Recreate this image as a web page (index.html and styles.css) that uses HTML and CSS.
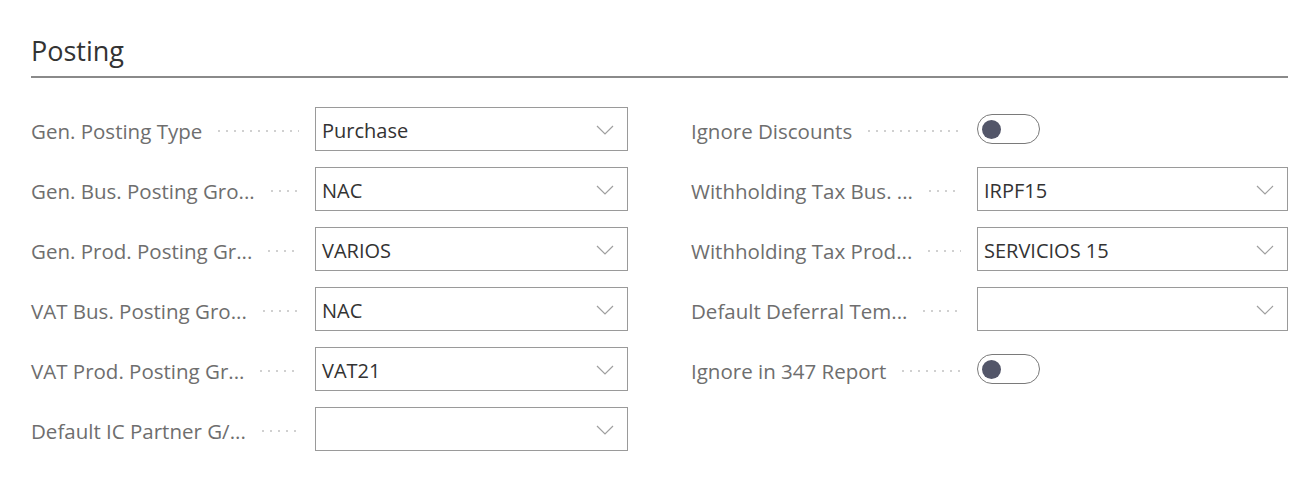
FILE: index.html
```html
<!DOCTYPE html>
<html lang="en">
<head>
<meta charset="utf-8">
<title>Posting</title>
<link rel="stylesheet" href="styles.css">
</head>
<body>
<section class="group">
  <h2 class="group-title">Posting</h2>
  <div class="columns">
    <div class="col">
      <div class="field">
        <div class="label"><span class="label-text">Gen. Posting Type</span><span class="leader"></span></div>
        <div class="select"><span class="value">Purchase</span><svg class="chev" viewBox="0 0 18 10"><polyline points="1,1 9,9 17,1"/></svg></div>
      </div>
      <div class="field">
        <div class="label"><span class="label-text">Gen. Bus. Posting Gro...</span><span class="leader"></span></div>
        <div class="select"><span class="value">NAC</span><svg class="chev" viewBox="0 0 18 10"><polyline points="1,1 9,9 17,1"/></svg></div>
      </div>
      <div class="field">
        <div class="label"><span class="label-text">Gen. Prod. Posting Gr...</span><span class="leader"></span></div>
        <div class="select"><span class="value">VARIOS</span><svg class="chev" viewBox="0 0 18 10"><polyline points="1,1 9,9 17,1"/></svg></div>
      </div>
      <div class="field">
        <div class="label"><span class="label-text">VAT Bus. Posting Gro...</span><span class="leader"></span></div>
        <div class="select"><span class="value">NAC</span><svg class="chev" viewBox="0 0 18 10"><polyline points="1,1 9,9 17,1"/></svg></div>
      </div>
      <div class="field">
        <div class="label"><span class="label-text">VAT Prod. Posting Gr...</span><span class="leader"></span></div>
        <div class="select"><span class="value">VAT21</span><svg class="chev" viewBox="0 0 18 10"><polyline points="1,1 9,9 17,1"/></svg></div>
      </div>
      <div class="field">
        <div class="label"><span class="label-text">Default IC Partner G/...</span><span class="leader"></span></div>
        <div class="select"><span class="value"></span><svg class="chev" viewBox="0 0 18 10"><polyline points="1,1 9,9 17,1"/></svg></div>
      </div>
    </div>
    <div class="col col-right">
      <div class="field">
        <div class="label"><span class="label-text">Ignore Discounts</span><span class="leader"></span></div>
        <div class="control"><span class="toggle"><span class="knob"></span></span></div>
      </div>
      <div class="field">
        <div class="label"><span class="label-text">Withholding Tax Bus. ...</span><span class="leader"></span></div>
        <div class="select"><span class="value">IRPF15</span><svg class="chev" viewBox="0 0 18 10"><polyline points="1,1 9,9 17,1"/></svg></div>
      </div>
      <div class="field">
        <div class="label"><span class="label-text">Withholding Tax Prod...</span><span class="leader"></span></div>
        <div class="select"><span class="value">SERVICIOS 15</span><svg class="chev" viewBox="0 0 18 10"><polyline points="1,1 9,9 17,1"/></svg></div>
      </div>
      <div class="field">
        <div class="label"><span class="label-text">Default Deferral Tem...</span><span class="leader"></span></div>
        <div class="select"><span class="value"></span><svg class="chev" viewBox="0 0 18 10"><polyline points="1,1 9,9 17,1"/></svg></div>
      </div>
      <div class="field">
        <div class="label"><span class="label-text">Ignore in 347 Report</span><span class="leader"></span></div>
        <div class="control"><span class="toggle"><span class="knob"></span></span></div>
      </div>
    </div>
  </div>
</section>
</body>
</html>
```

FILE: styles.css
```css
html, body {
  margin: 0;
  padding: 0;
  background: #ffffff;
}

body {
  font-family: "Open Sans", "Noto Sans", "Liberation Sans", sans-serif;
  color: #333333;
}

.group {
  padding: 33px 20px 0 31px;
}

.group-title {
  margin: 0;
  font-size: 27px;
  font-weight: 400;
  line-height: 36px;
  color: #333333;
  padding-bottom: 7px;
  border-bottom: 2px solid #8a8a8a;
}

.columns {
  display: grid;
  grid-template-columns: 1fr 1fr;
  column-gap: 63px;
  margin-top: 29px;
}

.col {
  display: flex;
  flex-direction: column;
  gap: 16px;
}

.field {
  display: flex;
  align-items: center;
  height: 44px;
}

.label {
  flex: 0 0 284px;
  display: flex;
  align-items: center;
  font-size: 20.5px;
  line-height: 28px;
  padding-top: 3px;
  color: #6e6e6e;
  white-space: nowrap;
}

.col-right .label {
  flex-basis: 286px;
}

.label-text {
  flex: 0 0 auto;
}

.leader {
  flex: 1 1 auto;
  height: 4px;
  margin: 0 16px 0 13px;
  background-image: radial-gradient(circle, #d0d0d0 0.9px, transparent 1.4px);
  background-size: 8px 4px;
  background-repeat: repeat-x;
  background-position: left center;
}

.select {
  flex: 1 1 auto;
  height: 44px;
  box-sizing: border-box;
  border: 1px solid #9a9a9a;
  display: flex;
  align-items: center;
  justify-content: space-between;
  padding: 2px 13px 0 6px;
  font-size: 20px;
  color: #333333;
}

.chev {
  width: 18px;
  height: 10px;
  flex: 0 0 auto;
}

.chev polyline {
  fill: none;
  stroke: #a0a0a0;
  stroke-width: 1.2;
}

.control {
  flex: 1 1 auto;
  display: flex;
  align-items: center;
}

.toggle {
  width: 63px;
  height: 30px;
  box-sizing: border-box;
  border: 1.5px solid #7a7a7a;
  border-radius: 15px;
  display: flex;
  align-items: center;
  padding-left: 4px;
}

.knob {
  width: 19px;
  height: 19px;
  border-radius: 50%;
  background: #535669;
}
```
